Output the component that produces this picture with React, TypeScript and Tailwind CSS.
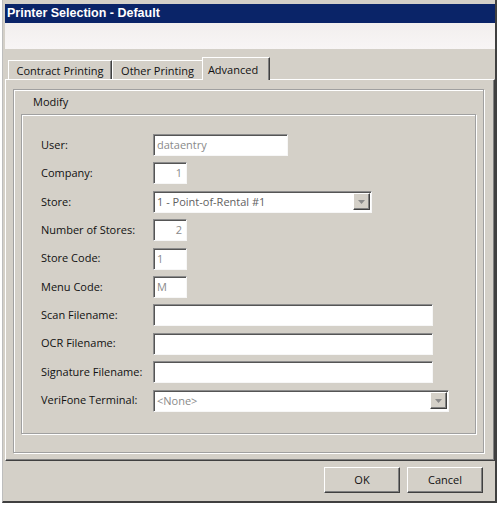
import type { ReactNode } from 'react'

// classic 3D borders
const sunken = 'border border-t-[#8c8c8c] border-l-[#8c8c8c] border-b-[#f7f7f7] border-r-[#f7f7f7] shadow-[inset_1px_1px_0_#555555] bg-white'
const raised = 'border border-t-white border-l-white border-b-[#404040] border-r-[#404040] shadow-[inset_-1px_-1px_0_#808080]'
const etched = 'border border-[#a0a0a0] shadow-[inset_1px_1px_0_#ffffff,1px_1px_0_#ffffff]'

function Arrow() {
  return (
    <div className={`flex h-[17px] w-[17px] items-center justify-center bg-[#d4d0c8] ${raised}`}>
      <svg width="7" height="4" viewBox="0 0 7 4">
        <path d="M0 0h7L3.5 4z" fill="#8a8a8a" />
      </svg>
    </div>
  )
}

function Box({ w, children, right, combo, color = 'text-[#8a8a8a]' }: { w: string; children?: ReactNode; right?: boolean; combo?: boolean; color?: string }) {
  return (
    <div className={`flex h-[22px] items-center ${w} ${sunken} ${color} ${right ? 'pr-[4px]' : 'pl-[3px]'}`}>
      <span className={`flex-1 whitespace-nowrap leading-[16px] ${right ? 'text-right' : ''}`}>{children}</span>
      {combo && <div className="pr-[1px]"><Arrow /></div>}
    </div>
  )
}

const rows: { label: string; field: ReactNode }[] = [
  { label: 'User:', field: <Box w="w-[135px]">dataentry</Box> },
  { label: 'Company:', field: <Box w="w-[34px]" right>1</Box> },
  { label: 'Store:', field: <Box w="w-[219px]" combo color="text-[#5f5f5f]">1 - Point-of-Rental #1</Box> },
  { label: 'Number of Stores:', field: <Box w="w-[34px]" right>2</Box> },
  { label: 'Store Code:', field: <Box w="w-[34px]">1</Box> },
  { label: 'Menu Code:', field: <Box w="w-[34px]">M</Box> },
  { label: 'Scan Filename:', field: <Box w="w-[280px]" /> },
  { label: 'OCR Filename:', field: <Box w="w-[280px]" /> },
  { label: 'Signature Filename:', field: <Box w="w-[280px]" /> },
  { label: 'VeriFone Terminal:', field: <Box w="w-[296px]" combo>&lt;None&gt;</Box> },
]

function Tab({ label, w, active, edge = true }: { label: string; w: string; active?: boolean; edge?: boolean }) {
  if (active) {
    return (
      <div className={`relative z-10 -mb-px flex h-[23px] ${w} items-start justify-center border-l border-t border-r border-l-white border-t-white border-r-[#404040] bg-[#d4d0c8] pt-[4px] pr-[6px] shadow-[inset_-1px_0_0_#808080]`}>
        {label}
      </div>
    )
  }
  return (
    <div className={`flex h-[19px] ${w} items-center justify-center border-l border-t border-l-white border-t-white ${edge ? 'border-r border-r-[#404040] shadow-[inset_-1px_0_0_#808080]' : ''} pt-[2px]`}>
      {label}
    </div>
  )
}

export default function App() {
  return (
    <div className="h-[505px] w-[498px] bg-white pl-[2px] font-['Open_Sans',sans-serif] text-[11px] text-[#111111]">
      <div className="flex h-[503px] w-[495px] flex-col border-l border-b-2 border-r-2 border-l-[#bdbdbd] border-b-[#404040] border-r-[#404040] bg-[#d4d0c8] pl-[2px] pt-[4px]">
        {/* caption */}
        <div className="flex h-[19px] items-center bg-[#0a2468] pl-[2px] font-['Liberation_Sans',Arial,sans-serif] text-[12.5px] font-bold text-white">
          Printer Selection - Default
        </div>
        <div className="h-[26px] bg-gradient-to-b from-[#f2efee] to-[#f8f5f5]" />

        {/* tab strip */}
        <div className="flex h-[30px] items-end pl-[3px]">
          <Tab label="Contract Printing" w="w-[104px]" />
          <Tab label="Other Printing" w="w-[90px]" edge={false} />
          <Tab label="Advanced" w="w-[68px]" active />
        </div>

        <div className="h-[382px] border-l border-t border-r border-b border-l-white border-t-white border-r-[#404040] border-b-[#404040] px-[7px] pt-[9px] shadow-[inset_-1px_-1px_0_#808080]">
          <div className={`h-[364px] w-[471px] px-[7px] ${etched}`}>
            <div className="h-[24px] pl-[12px] pt-[5px] leading-[14px]">Modify</div>
            <div className={`h-[320px] w-[455px] pl-[19px] pt-[19px] ${etched}`}>
              <div className="flex flex-col gap-[6.4px]">
                {rows.map((r) => (
                  <div key={r.label} className="flex items-center">
                    <div className="w-[112px] whitespace-nowrap">{r.label}</div>
                    {r.field}
                  </div>
                ))}
              </div>
            </div>
          </div>
        </div>

        {/* buttons */}
        <div className="flex justify-end gap-[7px] pr-[12px] pt-[6px]">
          <button className={`h-[26px] w-[76px] bg-[#d4d0c8] ${raised}`}>OK</button>
          <button className={`h-[26px] w-[76px] bg-[#d4d0c8] ${raised}`}>Cancel</button>
        </div>
      </div>
    </div>
  )
}
